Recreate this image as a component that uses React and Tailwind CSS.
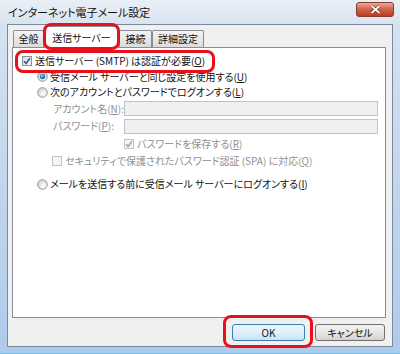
import React from "react";

const font = "font-['Noto_Sans_CJK_JP','Noto_Sans',sans-serif] [font-feature-settings:'palt']";

function U({ c }) {
  return <span className="underline underline-offset-[1px]">{c}</span>;
}

function Check({ checked, disabled }) {
  return (
    <span
      className={`w-[10px] h-[10px] shrink-0 border flex items-center justify-center ${
        disabled
          ? "border-[#c4c4c4] bg-[#f4f4f4]"
          : "border-[#8e8f8f] bg-gradient-to-br from-[#d8d8d8] to-[#fafafa]"
      }`}
    >
      {checked && (
        <svg width="8" height="8" viewBox="0 0 8 8">
          <path
            d="M1 4.2 L3.1 6.4 L7 1.2"
            stroke={disabled ? "#a6a6a6" : "#3d5596"}
            strokeWidth="1.6"
            fill="none"
          />
        </svg>
      )}
    </span>
  );
}

function Radio({ checked, id }) {
  return (
    <svg width="11" height="11" viewBox="0 0 11 11" className="shrink-0">
      <defs>
        <radialGradient id={`bg${id}`} cx="0.6" cy="0.65" r="0.7">
          <stop offset="0" stopColor="#ffffff" />
          <stop offset="1" stopColor="#cfcfcf" />
        </radialGradient>
        <radialGradient id={`dot${id}`} cx="0.4" cy="0.35" r="0.7">
          <stop offset="0" stopColor="#8fe0f8" />
          <stop offset="0.5" stopColor="#2a8fd0" />
          <stop offset="1" stopColor="#1a4f8f" />
        </radialGradient>
      </defs>
      <circle cx="5.5" cy="5.5" r="4.8" fill={`url(#bg${id})`} stroke="#8a8a8a" strokeWidth="0.9" />
      {checked && <circle cx="5.5" cy="5.5" r="2.7" fill={`url(#dot${id})`} />}
    </svg>
  );
}

function Tab({ label, active, w }) {
  if (active) {
    return (
      <div
        className={`${w} h-[22px] -mb-px relative z-10 bg-white border border-b-0 border-[#898c95] rounded-t-[2px] flex items-center justify-center`}
      >
        {label}
      </div>
    );
  }
  return (
    <div
      className={`${w} h-[17px] bg-gradient-to-b from-[#f3f3f3] to-[#dcdcdc] border border-b-0 border-[#898c95] rounded-t-[2px] flex items-center justify-center`}
    >
      {label}
    </div>
  );
}

function Btn({ children, def, w }) {
  return (
    <div
      className={`${w} h-[17px] rounded-[3px] border flex items-center justify-center ${
        def
          ? "border-[#3c7fb1] bg-gradient-to-b from-[#eaf6fd] via-[#e0f0fa] to-[#c6e4f6]"
          : "border-[#707070] bg-gradient-to-b from-[#f2f2f2] via-[#e6e6e6] to-[#d2d2d2]"
      }`}
    >
      {children}
    </div>
  );
}

export default function App() {
  return (
    <div className={`relative w-[400px] h-[354px] overflow-hidden bg-gradient-to-b from-[#d7e4f2] via-[#c3d6ec] to-[#aecbeb] text-[10px] leading-none text-[#111] ${font}`}>
      {/* title bar */}
      <div className="h-[24px] flex items-center justify-between pl-[8px] pr-[6px] bg-gradient-to-b from-[#e9eff6] to-[#d9e4f0]">
        <span className="text-[11px]">インターネット電子メール設定</span>
        <div className="self-start mt-[2px] w-[38px] h-[15px] rounded-[3px] border border-[#8a3a2e] bg-gradient-to-b from-[#eaa897] via-[#d2604a] to-[#bb3a22] flex items-center justify-center">
          <svg width="11" height="9" viewBox="0 0 11 9">
            <path d="M1.5 1 L9.5 8 M9.5 1 L1.5 8" stroke="#6a2418" strokeWidth="3" />
            <path d="M1.5 1 L9.5 8 M9.5 1 L1.5 8" stroke="#ffffff" strokeWidth="1.8" />
          </svg>
        </div>
      </div>

      {/* client area */}
      <div className="ml-[7px] w-[386px] h-[323px] bg-[#f0f0f0] border border-[#7a8a9c]">
        <div className="h-[22px] pl-[5px] flex items-end relative z-10">
          <Tab label="全般" w="w-[31px]" />
          <Tab label="送信サーバー" w="w-[75px]" active />
          <Tab label="接続" w="w-[33px]" />
          <Tab label="詳細設定" w="w-[52px]" />
        </div>

        <div className="ml-[4px] w-[374px] h-[271px] bg-white border border-[#898c95] pt-[5px]">
          <div className="h-[16px] flex items-center pl-[9px] gap-[3px]">
            <Check checked />
            <span>送信サーバー (SMTP) は認証が必要(<U c="O" />)</span>
          </div>
          <div className="h-[15px] flex items-center pl-[24px] gap-[2px]">
            <Radio checked id="a" />
            <span>受信メール サーバーと同じ設定を使用する(<U c="U" />)</span>
          </div>
          <div className="h-[16px] flex items-center pl-[24px] gap-[2px]">
            <Radio id="b" />
            <span>次のアカウントとパスワードでログオンする(<U c="L" />)</span>
          </div>
          <div className="h-[17px] flex items-center pl-[40px] text-[#8f8f8f]">
            <span className="w-[71px]">アカウント名(<U c="N" />):</span>
            <div className="w-[254px] h-[15px] bg-[#f0f0f0] border border-[#b5c4d6]" />
          </div>
          <div className="h-[18px] flex items-center pl-[40px] text-[#8f8f8f]">
            <span className="w-[71px]">パスワード(<U c="P" />):</span>
            <div className="w-[254px] h-[15px] bg-[#f0f0f0] border border-[#b5c4d6]" />
          </div>
          <div className="h-[17px] flex items-center pl-[111px] gap-[3px] text-[#8f8f8f]">
            <Check checked disabled />
            <span>パスワードを保存する(<U c="R" />)</span>
          </div>
          <div className="h-[17px] flex items-center pl-[39px] gap-[3px] text-[#8f8f8f]">
            <Check disabled />
            <span>セキュリティで保護されたパスワード認証 (SPA) に対応(<U c="Q" />)</span>
          </div>
          <div className="mt-[7px] h-[16px] flex items-center pl-[24px] gap-[2px]">
            <Radio id="c" />
            <span>メールを送信する前に受信メール サーバーにログオンする(<U c="I" />)</span>
          </div>
        </div>

        <div className="mt-[6px] pr-[7px] flex justify-end gap-[10px]">
          <Btn def w="w-[73px]">OK</Btn>
          <Btn w="w-[70px]">キャンセル</Btn>
        </div>
      </div>

      <div className="absolute left-0 right-0 bottom-0 h-px bg-[#5fc8ee]" />

      {/* red highlight marks */}
      <div className="absolute left-[43px] top-[23px] w-[77px] h-[27px] border-[3px] border-[#e8101a] rounded-[8px] z-20" />
      <div className="absolute left-[15px] top-[50px] w-[200px] h-[23px] border-[3px] border-[#e8101a] rounded-[8px] z-20" />
      <div className="absolute left-[223px] top-[315px] w-[90px] h-[33px] border-[3px] border-[#e8101a] rounded-[8px] z-20" />
    </div>
  );
}
